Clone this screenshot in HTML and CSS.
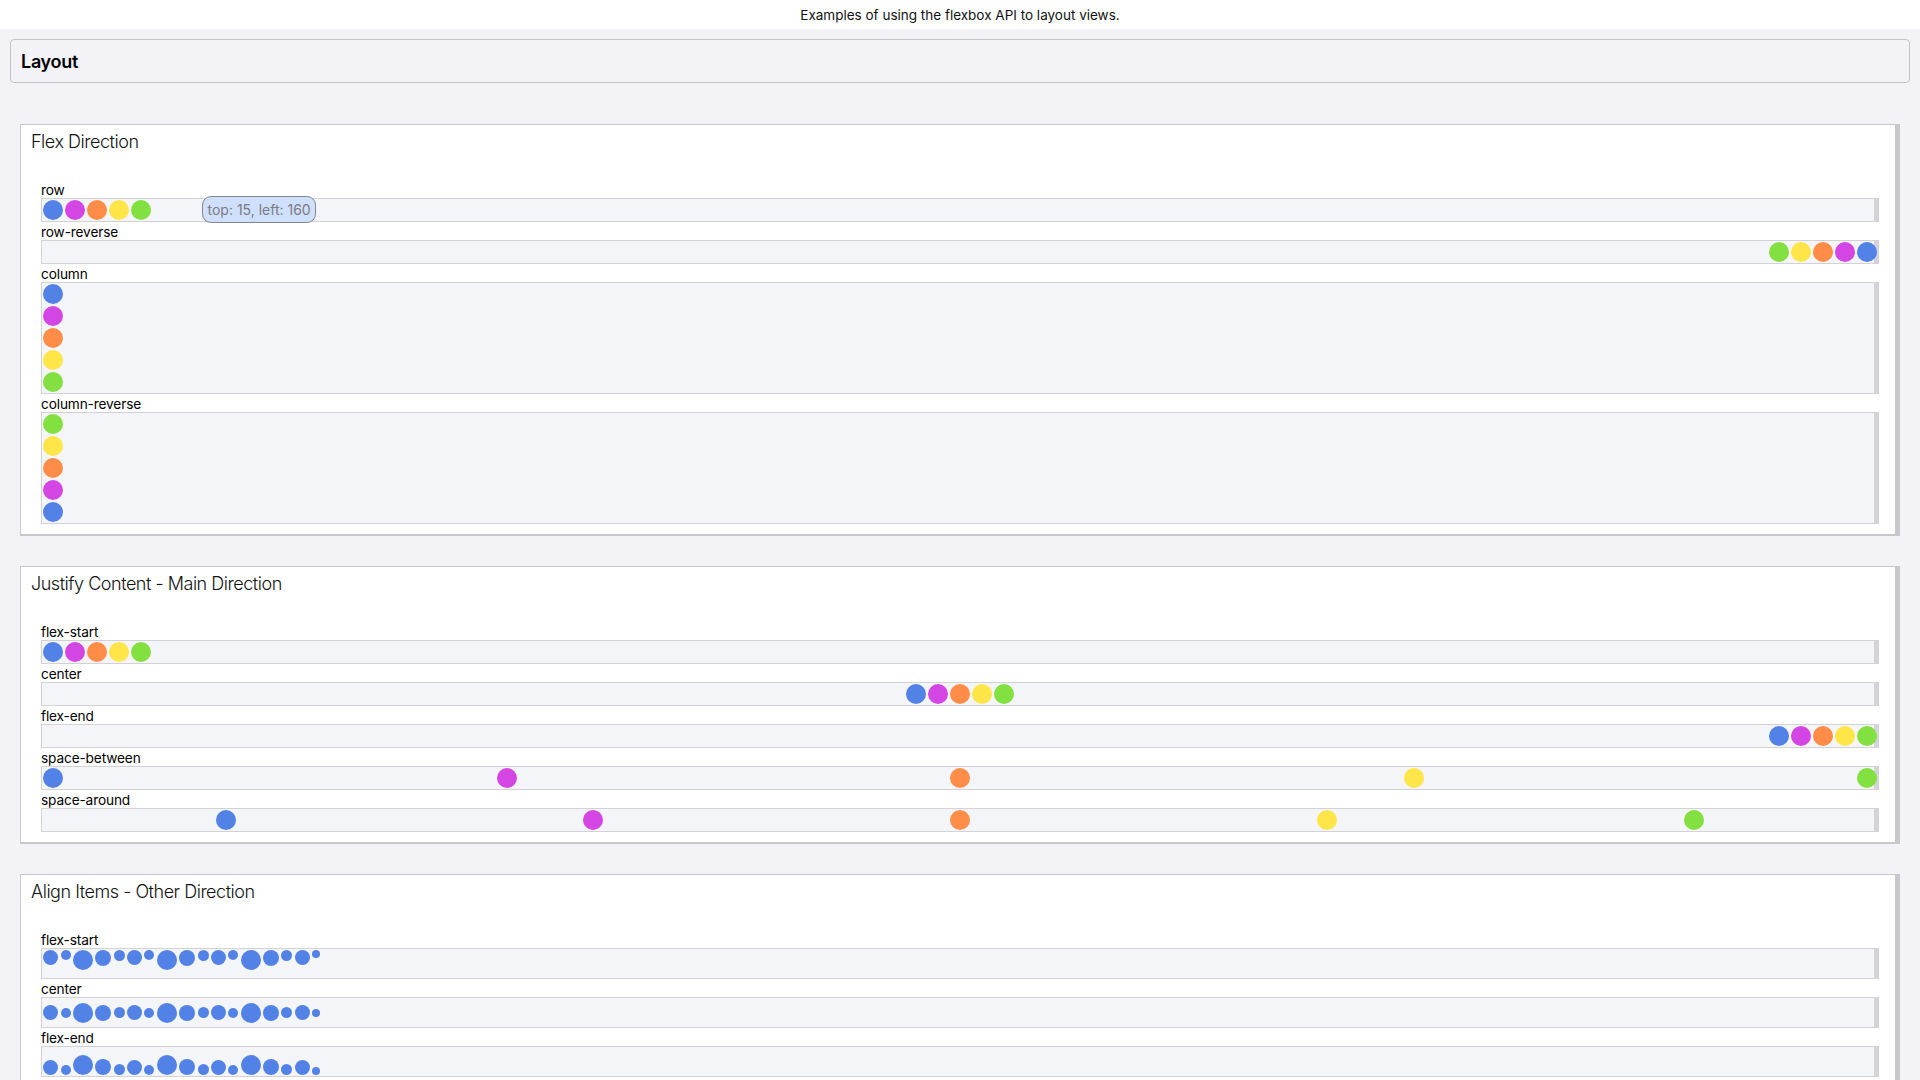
FILE: index.html
```html
<!DOCTYPE html>
<html lang="en">
<head>
<meta charset="utf-8">
<title>Layout</title>
<link rel="stylesheet" href="styles.css">
</head>
<body>
<div class="topbar">Examples of using the flexbox API to layout views.</div>
<main class="page">
  <header class="nav"><h1 class="nav-title">Layout</h1></header>

  <section class="card">
    <h2 class="card-title">Flex Direction</h2>
    <div class="examples">
      <div class="label">row</div>
      <div class="track">
        <span class="dot blue"></span><span class="dot pink"></span><span class="dot orange"></span><span class="dot yellow"></span><span class="dot green"></span>
        <div class="tooltip">top: 15, left: 160</div>
      </div>
      <div class="label">row-reverse</div>
      <div class="track dir-row-reverse">
        <span class="dot blue"></span><span class="dot pink"></span><span class="dot orange"></span><span class="dot yellow"></span><span class="dot green"></span>
      </div>
      <div class="label">column</div>
      <div class="track dir-column">
        <span class="dot blue"></span><span class="dot pink"></span><span class="dot orange"></span><span class="dot yellow"></span><span class="dot green"></span>
      </div>
      <div class="label">column-reverse</div>
      <div class="track dir-column-reverse">
        <span class="dot blue"></span><span class="dot pink"></span><span class="dot orange"></span><span class="dot yellow"></span><span class="dot green"></span>
      </div>
    </div>
  </section>

  <section class="card">
    <h2 class="card-title">Justify Content - Main Direction</h2>
    <div class="examples">
      <div class="label">flex-start</div>
      <div class="track">
        <span class="dot blue"></span><span class="dot pink"></span><span class="dot orange"></span><span class="dot yellow"></span><span class="dot green"></span>
      </div>
      <div class="label">center</div>
      <div class="track justify-center">
        <span class="dot blue"></span><span class="dot pink"></span><span class="dot orange"></span><span class="dot yellow"></span><span class="dot green"></span>
      </div>
      <div class="label">flex-end</div>
      <div class="track justify-end">
        <span class="dot blue"></span><span class="dot pink"></span><span class="dot orange"></span><span class="dot yellow"></span><span class="dot green"></span>
      </div>
      <div class="label">space-between</div>
      <div class="track justify-between">
        <span class="dot blue"></span><span class="dot pink"></span><span class="dot orange"></span><span class="dot yellow"></span><span class="dot green"></span>
      </div>
      <div class="label">space-around</div>
      <div class="track justify-around">
        <span class="dot blue"></span><span class="dot pink"></span><span class="dot orange"></span><span class="dot yellow"></span><span class="dot green"></span>
      </div>
    </div>
  </section>

  <section class="card">
    <h2 class="card-title">Align Items - Other Direction</h2>
    <div class="examples">
      <div class="label">flex-start</div>
      <div class="track tall align-start">
        <span class="ball s15"></span><span class="ball s10"></span><span class="ball s20"></span><span class="ball s16"></span><span class="ball s11"></span><span class="ball s15"></span><span class="ball s10"></span><span class="ball s20"></span><span class="ball s16"></span><span class="ball s11"></span><span class="ball s15"></span><span class="ball s10"></span><span class="ball s20"></span><span class="ball s16"></span><span class="ball s11"></span><span class="ball s15"></span><span class="ball s8"></span>
      </div>
      <div class="label">center</div>
      <div class="track tall align-center">
        <span class="ball s15"></span><span class="ball s10"></span><span class="ball s20"></span><span class="ball s16"></span><span class="ball s11"></span><span class="ball s15"></span><span class="ball s10"></span><span class="ball s20"></span><span class="ball s16"></span><span class="ball s11"></span><span class="ball s15"></span><span class="ball s10"></span><span class="ball s20"></span><span class="ball s16"></span><span class="ball s11"></span><span class="ball s15"></span><span class="ball s8"></span>
      </div>
      <div class="label">flex-end</div>
      <div class="track tall align-end">
        <span class="ball s15"></span><span class="ball s10"></span><span class="ball s20"></span><span class="ball s16"></span><span class="ball s11"></span><span class="ball s15"></span><span class="ball s10"></span><span class="ball s20"></span><span class="ball s16"></span><span class="ball s11"></span><span class="ball s15"></span><span class="ball s10"></span><span class="ball s20"></span><span class="ball s16"></span><span class="ball s11"></span><span class="ball s15"></span><span class="ball s8"></span>
      </div>
    </div>
  </section>
</main>
</body>
</html>
```
FILE: styles.css
```css
* { box-sizing: border-box; }

html, body {
  margin: 0;
  padding: 0;
}

body {
  background: #f2f2f7;
  font-family: Inter, "Noto Sans", "Liberation Sans", sans-serif;
  color: #000;
}

.topbar {
  height: 29px;
  background: #ffffff;
  font-size: 13.5px;
  line-height: 31px;
  text-align: center;
  color: #111;
  overflow: hidden;
}

.page {
  padding: 10px 10px 0 10px;
}

.nav {
  height: 44px;
  border: 1px solid #c2c2c7;
  border-radius: 4px;
  display: flex;
  align-items: center;
  padding-left: 10px;
  padding-top: 2px;
  margin-bottom: 41px;
}

.nav-title {
  margin: 0;
  font-size: 18px;
  font-weight: 600;
  line-height: 24px;
  letter-spacing: -0.3px;
}

.card {
  margin: 0 10px 30px 10px;
  background: #ffffff;
  border: 1px solid #c8c8cc;
  border-right-width: 5px;
  border-bottom-width: 2px;
  padding: 5px 16px 10px 10px;
}

.card-title {
  margin: 0 0 26px 0;
  height: 24px;
  font-size: 18px;
  line-height: 24px;
  font-weight: 300;
  letter-spacing: -0.47px;
  color: #111;
}

.examples {
  padding-left: 10px;
}

.label {
  font-size: 13.7px;
  line-height: 20px;
  height: 18px;
  letter-spacing: -0.15px;
}

.track {
  position: relative;
  display: flex;
  border: 1px solid #d1d1d6;
  background: #f4f5f8;
  box-shadow: inset -4px 0 0 #d4d4d8;
  min-height: 24px;
}

.dir-row-reverse { flex-direction: row-reverse; }
.dir-column { flex-direction: column; }
.dir-column-reverse { flex-direction: column-reverse; }

.justify-center { justify-content: center; }
.justify-end { justify-content: flex-end; }
.justify-between { justify-content: space-between; }
.justify-around { justify-content: space-around; }

.dot {
  display: block;
  flex: none;
  width: 20px;
  height: 20px;
  margin: 1px;
  border-radius: 50%;
}

.blue { background: #5282e6; }
.pink { background: #d446e3; }
.orange { background: #ff8d47; }
.yellow { background: #ffe547; }
.green { background: #82e040; }

.tooltip {
  position: absolute;
  left: 160px;
  top: -3px;
  height: 27px;
  padding: 0 4.5px;
  border: 1px solid #85858b;
  border-radius: 9px;
  background: #cfe0fc;
  color: #7b7b82;
  font-size: 14px;
  line-height: 25px;
  white-space: nowrap;
}

.tall {
  height: 31px;
}

.align-start { align-items: flex-start; }
.align-center { align-items: center; }
.align-end { align-items: flex-end; }

.ball {
  display: block;
  flex: none;
  margin: 1px 1.2px;
  border-radius: 50%;
  background: #5282e6;
}

.s8 { width: 8px; height: 8px; }
.s10 { width: 10px; height: 10px; }
.s11 { width: 11px; height: 11px; }
.s15 { width: 15px; height: 15px; }
.s16 { width: 16px; height: 16px; }
.s20 { width: 20px; height: 20px; }
```
